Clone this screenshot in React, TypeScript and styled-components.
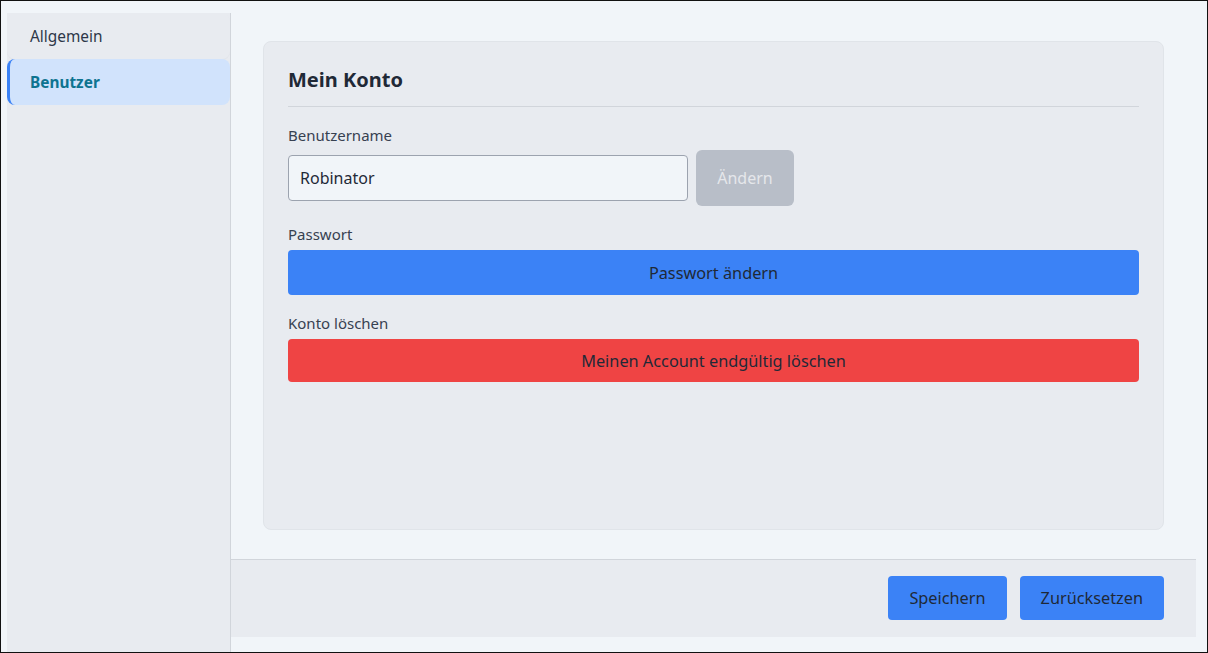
import React from "react";
import styled, { createGlobalStyle } from "styled-components";

const Global = createGlobalStyle`
  html, body { margin: 0; padding: 0; }
  body { font-family: "Noto Sans", "Open Sans", sans-serif; }
  * { box-sizing: border-box; }
`;

const Frame = styled.div`
  height: 100vh;
  border: 1px solid #111;
  background: #f1f5f9;
  display: flex;
  padding: 12px 11px 0 6px;
`;

const Sidebar = styled.nav`
  width: 224px;
  background: #e8ebf0;
  border-right: 1px solid #d1d5db;
  display: flex;
  flex-direction: column;
`;

const NavItem = styled.div<{ $active?: boolean }>`
  height: 46px;
  display: flex;
  align-items: center;
  border-radius: 8px;
  font-size: 15.4px;
  padding-left: ${(p) => (p.$active ? "20px" : "23px")};
  border-left: ${(p) => (p.$active ? "3px solid #3b82f6" : "none")};
  background: ${(p) => (p.$active ? "#d1e3fc" : "#e8ebf0")};
  color: ${(p) => (p.$active ? "#0e7490" : "#2d3748")};
  font-weight: ${(p) => (p.$active ? 700 : 400)};
  box-shadow: ${(p) => (p.$active ? "none" : "0 1px 1px rgba(0,0,0,0.03)")};
`;

const Main = styled.main`
  flex: 1;
  display: flex;
  flex-direction: column;
  padding-bottom: 15px;
`;

const Content = styled.div`
  flex: 1;
  display: flex;
  padding: 28px 32px 29px;
`;

const Card = styled.section`
  flex: 1;
  background: #e8ebf0;
  border: 1px solid #e0e4e9;
  border-radius: 8px;
  padding: 24px;
  display: flex;
  flex-direction: column;
`;

const Heading = styled.h2`
  margin: 0;
  font-size: 20px;
  line-height: 28px;
  font-weight: 700;
  color: #1f2937;
  padding-bottom: 12px;
  border-bottom: 1px solid #d1d5db;
`;

const Label = styled.div`
  font-size: 15px;
  line-height: 20px;
  color: #374151;
  margin-top: 18px;
  margin-bottom: 5px;
`;

const Row = styled.div`
  display: flex;
  align-items: center;
  gap: 8px;
`;

const Input = styled.input`
  width: 400px;
  height: 46px;
  border: 1px solid #9ca3af;
  border-radius: 4px;
  background: #f1f5f9;
  padding: 0 11px;
  font-family: "Noto Sans", sans-serif;
  font-size: 16px;
  color: #1f2937;
  outline: none;
`;

const GrayButton = styled.button`
  width: 98px;
  height: 56px;
  border: none;
  border-radius: 6px;
  background: #b8bec8;
  color: #e5e7eb;
  font-family: "Noto Sans", sans-serif;
  font-size: 16px;
`;

const WideButton = styled.button<{ $color: string; $h: number }>`
  width: 100%;
  height: ${(p) => p.$h}px;
  border: none;
  border-radius: 4px;
  background: ${(p) => p.$color};
  color: #1f2937;
  font-family: "Noto Sans", sans-serif;
  font-size: 16.3px;
  margin-top: 1px;
`;

const Footer = styled.footer`
  height: 78px;
  border-top: 1px solid #d1d5db;
  background: #e8ebf0;
  display: flex;
  justify-content: flex-end;
  align-items: center;
  gap: 13px;
  padding: 0 32px 1px;
`;

const FooterButton = styled.button`
  height: 44px;
  padding: 0 21px;
  border: none;
  border-radius: 4px;
  background: #3b82f6;
  color: #1f2937;
  font-family: "Noto Sans", sans-serif;
  font-size: 16.3px;
`;

export default function App() {
  return (
    <>
      <Global />
      <Frame>
        <Sidebar>
          <NavItem>Allgemein</NavItem>
          <NavItem $active>Benutzer</NavItem>
        </Sidebar>
        <Main>
          <Content>
            <Card>
              <Heading>Mein Konto</Heading>
              <Label>Benutzername</Label>
              <Row>
                <Input defaultValue="Robinator" />
                <GrayButton>Ändern</GrayButton>
              </Row>
              <Label>Passwort</Label>
              <WideButton $color="#3b82f6" $h={45}>Passwort ändern</WideButton>
              <Label>Konto löschen</Label>
              <WideButton $color="#ef4444" $h={43}>Meinen Account endgültig löschen</WideButton>
            </Card>
          </Content>
          <Footer>
            <FooterButton>Speichern</FooterButton>
            <FooterButton>Zurücksetzen</FooterButton>
          </Footer>
        </Main>
      </Frame>
    </>
  );
}
